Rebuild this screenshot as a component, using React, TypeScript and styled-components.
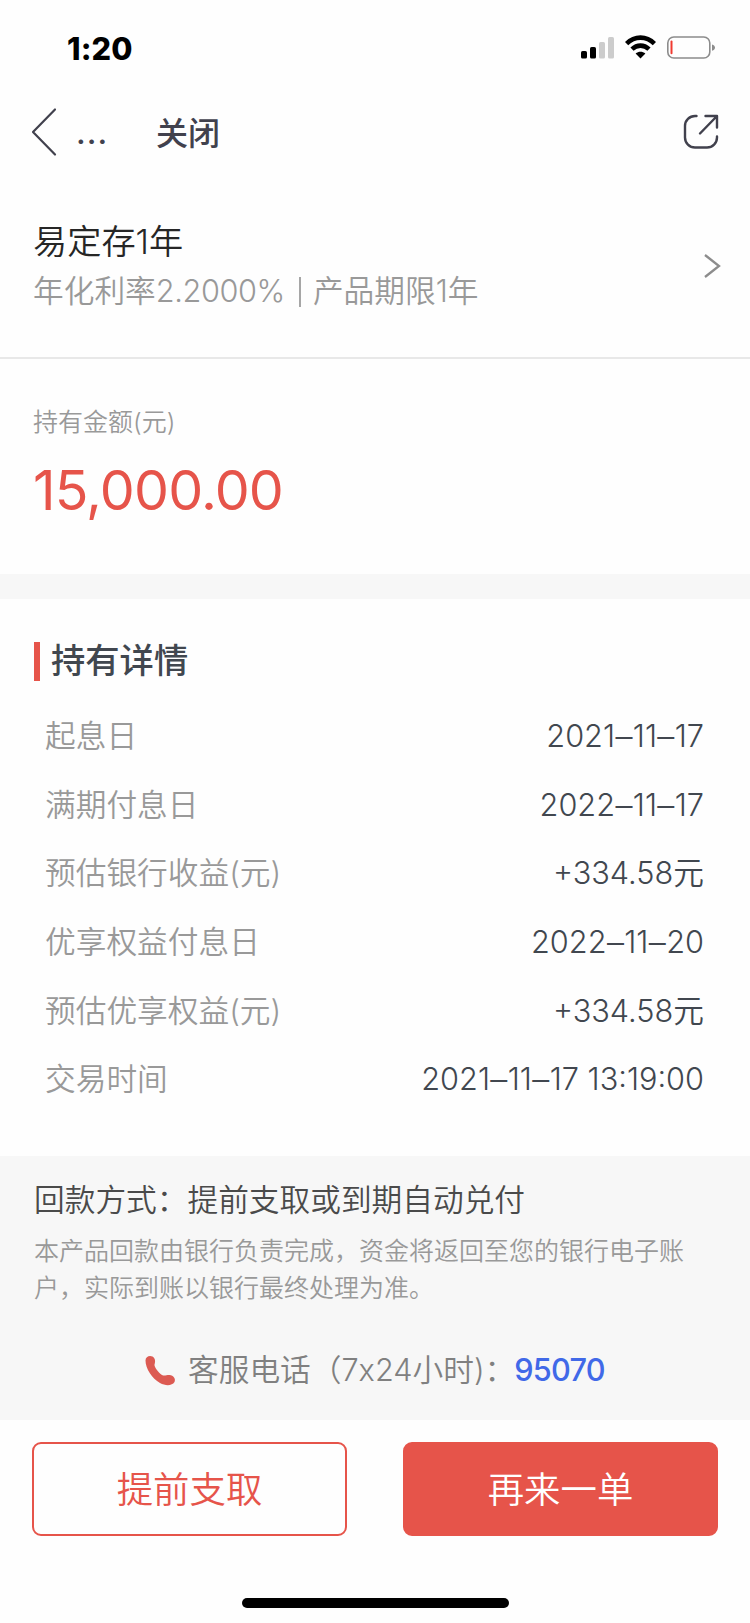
import React from "react";
import styled, { createGlobalStyle } from "styled-components";

const GlobalStyle = createGlobalStyle`
  * { box-sizing: border-box; }
  body {
    margin: 0;
    background: #fefefe;
    font-family: Inter, "Noto Sans CJK SC", sans-serif;
    font-weight: 350;
  }
`;

const Screen = styled.main`
  width: 750px;
  height: 1623px;
  display: flex;
  flex-direction: column;
  overflow: hidden;
`;

const StatusBar = styled.header`
  height: 88px;
  padding: 33px 34px 0 67px;
  display: flex;
  justify-content: space-between;
`;

const Clock = styled.span`
  font-size: 30.7px;
  line-height: 31px;
  font-weight: 780;
  letter-spacing: 0.1px;
  color: #000;
`;

const StatusIcons = styled.div`
  display: flex;
  align-items: flex-start;
  gap: 11px;
  svg { display: block; }
`;

const NavBar = styled.nav`
  height: 88px;
  padding: 0 31px 0 31px;
  display: flex;
  align-items: center;
  color: #41414d;
  svg { display: block; }
`;

const More = styled.span`
  width: 80px;
  padding: 2px 0 0 19px;
  font-size: 32px;
  line-height: 40px;
  font-weight: 500;
  letter-spacing: 1.1px;
`;

const Close = styled.span`
  flex: 1;
  padding: 3px 0 0 19px;
  font-size: 32px;
  line-height: 44px;
  font-weight: 500;
`;

const Product = styled.section`
  height: 183px;
  padding: 42px 29px 0 33px;
  display: flex;
  justify-content: space-between;
  border-bottom: 2px solid #e8e8e8;
`;

const ProductName = styled.h1`
  margin: 0;
  font-size: 34.2px;
  line-height: 48px;
  font-weight: 350;
  color: #262626;
`;

const ProductInfo = styled.p`
  margin: 3px 0 0;
  font-size: 30.7px;
  line-height: 44px;
  color: #999;
`;

const Rate = styled.span`
  letter-spacing: -0.4px;
`;

const Separator = styled.span`
  display: inline-block;
  width: 2px;
  height: 30px;
  margin: 0 12px 0 14px;
  vertical-align: -5px;
  background: #a6a6a6;
`;

const ChevronBox = styled.div`
  padding-top: 35px;
`;

const Holding = styled.section`
  height: 240px;
  flex: none;
  padding: 45px 33px 0;
  border-bottom: 25px solid #f7f7f7;
`;

const HoldingLabel = styled.div`
  font-size: 25px;
  line-height: 36px;
  color: #999;
`;

const Amount = styled.div`
  margin-top: 17px;
  font-size: 55.5px;
  line-height: 66px;
  letter-spacing: -0.85px;
  font-weight: 380;
  color: #e6544a;
`;

const Details = styled.section`
  height: 557px;
  padding-top: 38px;
`;

const Heading = styled.h2`
  margin: 0;
  padding-left: 34px;
  height: 48px;
  display: flex;
  align-items: center;
  gap: 11px;
  font-size: 34.3px;
  line-height: 50px;
  font-weight: 500;
  color: #41474f;
  &::before {
    content: "";
    width: 6px;
    height: 39px;
    background: #e6544a;
  }
`;

const Rows = styled.dl`
  margin: 17px 46px 0 45px;
`;

const Row = styled.div`
  height: 68.6px;
  display: flex;
  align-items: center;
  justify-content: space-between;
  font-size: 30.7px;
  line-height: 44px;
`;

const Term = styled.dt`
  color: #999;
`;

const Value = styled.dd`
  margin: 0;
  color: #41474f;
`;

const Dash = styled.span`
  padding: 0 0.4px;
  font-size: 34px;
  line-height: 1;
  vertical-align: -2px;
`;

const Notice = styled.section`
  height: 264px;
  padding: 22px 34px 0;
  background: #f7f7f7;
`;

const NoticeTitle = styled.h3`
  margin: 0;
  font-size: 30.7px;
  line-height: 44px;
  font-weight: 350;
  color: #4a4a4a;
`;

const NoticeText = styled.p`
  margin: 11px 0 0;
  width: 656px;
  font-size: 25px;
  line-height: 37px;
  color: #999;
`;

const Hotline = styled.div`
  height: 44px;
  margin-top: 41px;
  padding-left: 111px;
  display: flex;
  align-items: center;
  font-size: 30.7px;
  line-height: 44px;
  color: #808080;
  svg { display: block; margin-right: 12px; }
`;

const Phone = styled.a`
  margin-left: -1px;
  font-weight: 450;
  letter-spacing: -0.8px;
  color: #4169e8;
`;

const Actions = styled.footer`
  padding: 22px 32px 0;
  display: flex;
  justify-content: space-between;
`;

const Button = styled.button<{ $filled?: boolean }>`
  width: 315px;
  height: 94px;
  padding: 2px 0 0;
  border: 2px solid #e6544a;
  border-radius: 9px;
  font: inherit;
  font-size: 36.4px;
  line-height: 50px;
  background: ${(p) => (p.$filled ? "#e6544a" : "#fefefe")};
  color: ${(p) => (p.$filled ? "#fff" : "#e6544a")};
`;

const HomeIndicator = styled.div`
  width: 267px;
  height: 10px;
  margin: 62px auto 0;
  border-radius: 5px;
  background: #000;
`;

const Signal = () => (
  <svg width="33" height="28" viewBox="581 33 33 28">
    <rect x="581" y="51" width="6" height="7.5" rx="1.6" fill="#000" />
    <rect x="590" y="47" width="6" height="11.5" rx="1.6" fill="#000" />
    <rect x="599" y="42" width="6" height="16.5" rx="1.6" fill="#ccc" />
    <rect x="608" y="37" width="6" height="21.5" rx="1.6" fill="#ccc" />
  </svg>
);

const Wifi = () => (
  <svg width="31" height="28" viewBox="625 33 31 28">
    <path d="M626.6 43.6C634.6 35.6 646.4 35.6 654.4 43.6" fill="none" stroke="#000" strokeWidth="4.6" />
    <path d="M632 49.2C637 44.4 644 44.4 649 49.2" fill="none" stroke="#000" strokeWidth="4.6" />
    <path d="M635.6 53.6C638.6 51 642.4 51 645.4 53.6L640.5 58.5Z" fill="#000" />
  </svg>
);

const Battery = () => (
  <svg width="49" height="28" viewBox="667 33 49 28">
    <rect x="667.8" y="37" width="42" height="21" rx="6" fill="none" stroke="#8c8c8c" strokeWidth="1.6" />
    <rect x="670.5" y="40.6" width="2" height="13.6" rx="1" fill="#f03a30" />
    <path d="M712 44.500C716 45.500 716 49.700 712 50.700Z" fill="#8c8c8c" />
  </svg>
);

const details = [
  { label: "起息日", value: "2021–11–17" },
  { label: "满期付息日", value: "2022–11–17" },
  { label: "预估银行收益(元)", value: "+334.58元" },
  { label: "优享权益付息日", value: "2022–11–20" },
  { label: "预估优享权益(元)", value: "+334.58元" },
  { label: "交易时间", value: "2021–11–17 13:19:00" },
];

const withDashes = (text: string) =>
  text.split("–").map((part, i) => (
    <React.Fragment key={i}>
      {i > 0 && <Dash>–</Dash>}
      {part}
    </React.Fragment>
  ));

export default function App() {
  return (
    <Screen>
      <GlobalStyle />
      <StatusBar>
        <Clock>1:20</Clock>
        <StatusIcons>
          <Signal />
          <Wifi />
          <Battery />
        </StatusIcons>
      </StatusBar>
      <NavBar>
        <svg width="26" height="50" viewBox="31 107 26 50" fill="none" stroke="currentColor" strokeWidth="2.2" strokeLinecap="round" strokeLinejoin="round">
          <path d="M55 109.500L33 132L55 154.500" />
        </svg>
        <More>...</More>
        <Close>关闭</Close>
        <svg width="36" height="36" viewBox="683 114 36 36" fill="none" stroke="currentColor" strokeWidth="2.4" strokeLinecap="round" strokeLinejoin="round">
          <path d="M696.500 116H695A10 10 0 0 0 685 126V137.500A10 10 0 0 0 695 147.500H707A10 10 0 0 0 717 137.500V136.500" />
          <path d="M705.500 116H717V127.500M717 116L700 133.500" />
        </svg>
      </NavBar>
      <Product>
        <div>
          <ProductName>易定存1年</ProductName>
          <ProductInfo>
            年化利率<Rate>2.2000%</Rate>
            <Separator />
            产品期限1年
          </ProductInfo>
        </div>
        <ChevronBox>
          <svg width="18" height="26" viewBox="703 253 18 26" fill="none" stroke="#8c8c8c" strokeWidth="2.300">
            <path d="M705 255L719 266L705 277" />
          </svg>
        </ChevronBox>
      </Product>
      <Holding>
        <HoldingLabel>持有金额(元)</HoldingLabel>
        <Amount>15,000.00</Amount>
      </Holding>
      <Details>
        <Heading>持有详情</Heading>
        <Rows>
          {details.map((d) => (
            <Row key={d.label}>
              <Term>{d.label}</Term>
              <Value>{withDashes(d.value)}</Value>
            </Row>
          ))}
        </Rows>
      </Details>
      <Notice>
        <NoticeTitle>回款方式：提前支取或到期自动兑付</NoticeTitle>
        <NoticeText>本产品回款由银行负责完成，资金将返回至您的银行电子账户，实际到账以银行最终处理为准。</NoticeText>
        <Hotline>
          <svg width="31" height="31" viewBox="-0.5 -0.5 31 31" fill="#dc5a52">
            <path d="M0 5C0 1 4-.5 7 1C10 3 10 6 9 9C8.500 11 13 17.500 16.500 19.500C19 21 21 19.300 24 19.500C28 20 30.500 23 29 26.500C26.500 30.500 20 30.500 14.500 27.500C6.500 23 0 13 0 5Z" />
          </svg>
          <span>客服电话（7x24小时)：</span>
          <Phone>95070</Phone>
        </Hotline>
      </Notice>
      <Actions>
        <Button>提前支取</Button>
        <Button $filled>再来一单</Button>
      </Actions>
      <HomeIndicator />
    </Screen>
  );
}
